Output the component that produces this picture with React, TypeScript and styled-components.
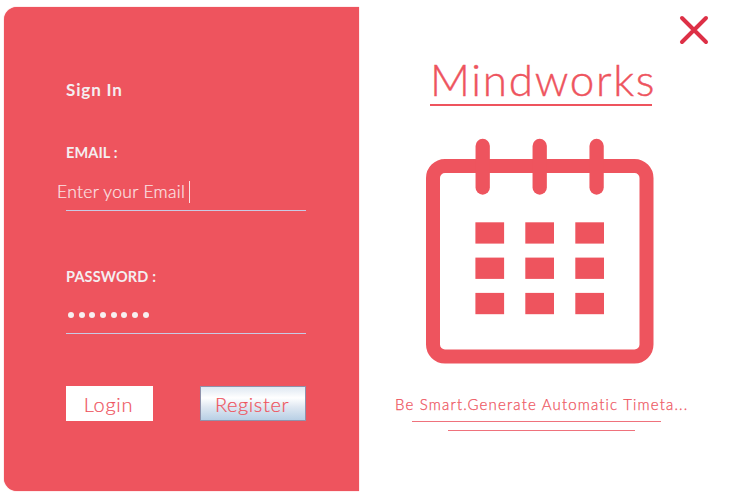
import React from "react";
import styled, { createGlobalStyle } from "styled-components";

const CORAL = "#ee545e";

const GlobalStyle = createGlobalStyle`
  *, *::before, *::after { box-sizing: border-box; }
  body { margin: 0; background: #fff; font-family: "Century Gothic", Lato, sans-serif; overflow: hidden; }
`;

const Window = styled.main`
  display: grid;
  grid-template-columns: 355px 1fr;
  width: 755px;
  height: 496px;
  padding: 7px 0 5px 4px;
  background: #fff;
`;

const SignInPanel = styled.form`
  display: flex;
  flex-direction: column;
  padding: 72px 53px 0 62px;
  border-radius: 13px 0 0 13px;
  background: ${CORAL};
  box-shadow: 0 0 1px ${CORAL};
`;

const Heading = styled.h2`
  margin: 0 0 42px;
  font-size: 17px;
  line-height: 22px;
  font-weight: 700;
  letter-spacing: 0.85px;
  color: #f4eef0;
`;

const Field = styled.div<{ $height: number }>`
  display: flex;
  flex-direction: column;
  height: ${(p) => p.$height}px;
`;

const Label = styled.label<{ $spacing: number }>`
  font-size: 14.5px;
  line-height: 20px;
  font-weight: 700;
  letter-spacing: ${(p) => p.$spacing}px;
  color: #f4eef0;
`;

const Entry = styled.div<{ $height: number }>`
  display: flex;
  align-items: center;
  height: ${(p) => p.$height}px;
  border-bottom: 1px solid #c8cae4;
`;

const EmailText = styled.span`
  margin: 11px 4px 0 -9px;
  font-size: 17.5px;
  line-height: 24px;
  font-weight: 300;
  letter-spacing: 0.3px;
  white-space: nowrap;
  color: #fbe3e5;
  -webkit-text-stroke: 0.2px #fbe3e5;
`;

const Caret = styled.span`
  width: 1px;
  height: 22px;
  margin-top: 10px;
  background: #f9dfe2;
`;

const Mask = styled.div`
  display: flex;
  gap: 4.7px;
  margin: 9px 0 0 2px;
`;

const Dot = styled.i`
  width: 6px;
  height: 6px;
  border-radius: 50%;
  background: #f7eff0;
`;

const Actions = styled.div`
  display: flex;
  justify-content: space-between;
`;

const Button = styled.button<{ $primary?: boolean; $spacing: number }>`
  width: ${(p) => (p.$primary ? 87 : 106)}px;
  height: 35px;
  margin: 0;
  padding: 0 2px 0 0;
  border: ${(p) => (p.$primary ? "0" : "1px solid #8f91aa")};
  background: ${(p) =>
    p.$primary ? "#fff" : "linear-gradient(#dfe8f2 0%, #fff 33%, #dfe8f2 60%, #b8cfe5 100%)"};
  color: ${CORAL};
  font: 300 20px/24px "Century Gothic", Lato, sans-serif;
  letter-spacing: ${(p) => p.$spacing}px;
  -webkit-text-stroke: 0.2px ${CORAL};
`;

const BrandPanel = styled.section`
  display: flex;
  flex-direction: column;
  align-items: flex-start;
`;

const CloseButton = styled.button`
  align-self: flex-end;
  width: 30px;
  height: 30px;
  margin: 8px 46px 0 0;
  padding: 0;
  border: 0;
  background: none;

  svg { display: block; }
`;

const Title = styled.h1`
  width: 222px;
  height: 52px;
  margin: 7px 0 0 71px;
  font-size: 44px;
  line-height: 55px;
  font-weight: 300;
  letter-spacing: 1.7px;
  white-space: nowrap;
  color: ${CORAL};
  -webkit-text-stroke: 0.4px ${CORAL};
`;

const Rule = styled.div<{ $width: number; $left: number; $top?: number; $soft?: boolean }>`
  width: ${(p) => p.$width}px;
  height: ${(p) => (p.$soft ? 1 : 2)}px;
  margin: ${(p) => p.$top ?? 0}px 0 0 ${(p) => p.$left}px;
  background: ${(p) => (p.$soft ? "#ef727c" : CORAL)};
`;

const Calendar = styled.svg`
  display: block;
  margin: 32px 0 0 67px;
`;

const Tagline = styled.p`
  margin: 30px 0 0 36px;
  font-size: 15px;
  line-height: 20px;
  font-weight: 300;
  letter-spacing: 1.17px;
  white-space: nowrap;
  color: ${CORAL};
  -webkit-text-stroke: 0.25px ${CORAL};
`;

export default function App() {
  return (
    <>
      <GlobalStyle />
      <Window>
        <SignInPanel>
          <Heading>Sign In</Heading>
          <Field $height={124}>
            <Label $spacing={0.1}>EMAIL :</Label>
            <Entry $height={48}>
              <EmailText>Enter your Email</EmailText>
              <Caret />
            </Entry>
          </Field>
          <Field $height={119}>
            <Label $spacing={0.15}>PASSWORD :</Label>
            <Entry $height={47}>
              <Mask>
                {Array.from({ length: 8 }, (_, i) => (
                  <Dot key={i} />
                ))}
              </Mask>
            </Entry>
          </Field>
          <Actions>
            <Button type="button" $primary $spacing={0.7}>Login</Button>
            <Button type="button" $spacing={0.6}>Register</Button>
          </Actions>
        </SignInPanel>
        <BrandPanel>
          <CloseButton type="button" aria-label="Close">
            <svg width="30" height="30" viewBox="0 0 30 30">
              <path d="M3 3 27 27M27 3 3 27" stroke="#dd3046" strokeWidth="4" strokeLinecap="round" />
            </svg>
          </CloseButton>
          <Title>Mindworks</Title>
          <Rule $width={222} $left={71} />
          <Calendar width="228" height="226" viewBox="0 0 228 226">
            <rect x="7" y="28" width="213.5" height="190.5" rx="12" fill="none" stroke={CORAL} strokeWidth="14" />
            {[56.7, 113.7, 170.6].map((x) => (
              <path key={x} d={`M${x} 8V49.5`} stroke={CORAL} strokeWidth="14.3" strokeLinecap="round" />
            ))}
            {[84.3, 119.6, 154.9].map((y) =>
              [49.4, 99.3, 149.3].map((x) => (
                <rect key={`${x}-${y}`} x={x} y={y} width="28.7" height="21.3" fill={CORAL} />
              ))
            )}
          </Calendar>
          <Tagline>Be Smart.Generate Automatic Timeta...</Tagline>
          <Rule $width={249} $left={53} $top={7} $soft />
          <Rule $width={187} $left={89} $top={8} $soft />
        </BrandPanel>
      </Window>
    </>
  );
}
